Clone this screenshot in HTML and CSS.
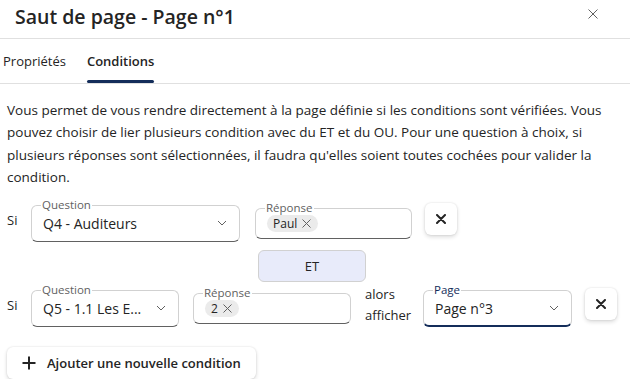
FILE: index.html
```html
<!DOCTYPE html>
<html lang="fr">
  <head>
    <meta charset="UTF-8" />
    <meta name="viewport" content="width=device-width, initial-scale=1.0" />
    <title>Saut de page</title>
    <link rel="stylesheet" href="styles.css">
  </head>
  <body>
    <div class="dialog">
      <header class="dialog-header">
        <h1>Saut de page - Page n°1</h1>
        <button class="close-button" aria-label="Fermer">
          <svg width="10" height="10" viewBox="0 0 10 10">
            <path d="M0.5 0.5 L9.5 9.5 M9.5 0.5 L0.5 9.5" stroke="#616161" stroke-width="1" fill="none" />
          </svg>
        </button>
      </header>

      <nav class="tabs">
        <button class="tab">Propriétés</button>
        <button class="tab tab-active">Conditions</button>
      </nav>

      <div class="content">
        <p class="description">
          Vous permet de vous rendre directement à la page définie si les conditions sont vérifiées. Vous
          pouvez choisir de lier plusieurs condition avec du ET et du OU. Pour une question à choix, si
          plusieurs réponses sont sélectionnées, il faudra qu'elles soient toutes cochées pour valider la
          condition.
        </p>

        <!-- condition 1 -->
        <div class="condition-row">
          <span class="row-label">Si</span>
          <fieldset class="field field-select question-1">
            <legend>Question</legend>
            <div class="field-value">
              <span class="value-text">Q4 - Auditeurs</span>
              <svg class="chevron" width="10" height="6" viewBox="0 0 10 6">
                <path d="M1 1 L5 5 L9 1" stroke="#616161" stroke-width="1" fill="none" />
              </svg>
            </div>
          </fieldset>
          <fieldset class="field field-tags answer-1">
            <legend>Réponse</legend>
            <div class="tag-list">
              <span class="tag">Paul
                <svg width="9" height="9" viewBox="0 0 9 9">
                  <path d="M0.5 0.5 L8.5 8.5 M8.5 0.5 L0.5 8.5" stroke="#616161" stroke-width="1" fill="none" />
                </svg>
              </span>
            </div>
          </fieldset>
          <button class="delete-button" aria-label="Supprimer">
            <svg width="10" height="10" viewBox="0 0 10 10">
              <path d="M1 1 L9 9 M9 1 L1 9" stroke="#242424" stroke-width="2" stroke-linecap="round" fill="none" />
            </svg>
          </button>
        </div>

        <div class="operator">
          <button class="operator-button">ET</button>
        </div>

        <!-- condition 2 -->
        <div class="condition-row">
          <span class="row-label">Si</span>
          <fieldset class="field field-select question-2">
            <legend>Question</legend>
            <div class="field-value">
              <span class="value-text">Q5 - 1.1 Les E...</span>
              <svg class="chevron" width="10" height="6" viewBox="0 0 10 6">
                <path d="M1 1 L5 5 L9 1" stroke="#616161" stroke-width="1" fill="none" />
              </svg>
            </div>
          </fieldset>
          <fieldset class="field field-tags answer-2">
            <legend>Réponse</legend>
            <div class="tag-list">
              <span class="tag">2
                <svg width="9" height="9" viewBox="0 0 9 9">
                  <path d="M0.5 0.5 L8.5 8.5 M8.5 0.5 L0.5 8.5" stroke="#616161" stroke-width="1" fill="none" />
                </svg>
              </span>
            </div>
          </fieldset>
          <span class="then-label">alors<br>afficher</span>
          <fieldset class="field field-select field-focused page-select">
            <legend>Page</legend>
            <div class="field-value">
              <span class="value-text">Page n°3</span>
              <svg class="chevron" width="10" height="6" viewBox="0 0 10 6">
                <path d="M1 1 L5 5 L9 1" stroke="#616161" stroke-width="1" fill="none" />
              </svg>
            </div>
          </fieldset>
          <button class="delete-button" aria-label="Supprimer">
            <svg width="10" height="10" viewBox="0 0 10 10">
              <path d="M1 1 L9 9 M9 1 L1 9" stroke="#242424" stroke-width="2" stroke-linecap="round" fill="none" />
            </svg>
          </button>
        </div>

        <button class="add-button">
          <svg width="14" height="14" viewBox="0 0 14 14">
            <path d="M7 0.5 V13.5 M0.5 7 H13.5" stroke="#242424" stroke-width="2" fill="none" />
          </svg>
          Ajouter une nouvelle condition
        </button>
      </div>
    </div>
  </body>
</html>
```

FILE: styles.css
```css
body {
  margin: 0;
  background-color: #ffffff;
  color: #242424;
  font-family: "Open Sans", "Noto Sans", sans-serif;
  font-size: 13px;
}
button {
  font-family: inherit;
  color: inherit;
  cursor: pointer;
}
.dialog {
  width: 630px;
}
.dialog-header {
  display: flex;
  align-items: center;
  justify-content: space-between;
  height: 38px;
  padding: 0 32px 0 15px;
  border-bottom: 1px solid #e0e0e0;
}
.dialog-header h1 {
  margin: 0;
  font-size: 19.5px;
  font-weight: 600;
  line-height: 26px;
  margin-top: -4px;
}
.close-button {
  display: flex;
  padding: 0;
  border: none;
  background: none;
  margin-top: -10px;
}
.tabs {
  display: flex;
  gap: 21px;
  height: 44px;
  padding-left: 3px;
  border-bottom: 1px solid #e0e0e0;
}
.tab {
  position: relative;
  padding: 0;
  border: none;
  background: none;
  font-size: 13px;
  line-height: 20px;
}
.tab-active {
  font-weight: 600;
}
.tab-active::after {
  content: "";
  position: absolute;
  left: 0;
  right: 0;
  bottom: 0;
  height: 3px;
  border-radius: 2px;
  background-color: #142d5a;
}
.content {
  padding: 0 7px;
}
.description {
  margin: 15px 0 9px;
  font-size: 13.5px;
  line-height: 22.3px;
}
.condition-row {
  display: flex;
  align-items: center;
}
.row-label {
  width: 24px;
}
.field {
  margin: 0;
  padding: 0 9px 8px;
  border: 1px solid #d1d1d1;
  border-bottom-color: #616161;
  border-radius: 6px;
  min-width: 0;
}
.field legend {
  padding: 0 1px;
  font-size: 11.5px;
  line-height: 16px;
  color: #616161;
}
.field-value {
  display: flex;
  align-items: center;
  justify-content: space-between;
  height: 20px;
  padding: 0 3px 0 2px;
  font-size: 14px;
}
.value-text {
  white-space: nowrap;
}
.field-tags {
  padding: 0 9px 4px;
}
.tag-list {
  display: flex;
  height: 18px;
  padding-left: 2px;
}
.tag {
  display: inline-flex;
  align-items: center;
  gap: 5px;
  height: 17px;
  margin-top: -1px;
  padding: 0 7px 0 6px;
  border-radius: 9px;
  background-color: #ebebeb;
  font-size: 12px;
}
.field-focused {
  border-bottom: 2px solid #142d5a;
  padding-bottom: 7px;
}
.field-focused legend {
  color: #142d5a;
}
.question-1 {
  width: 209px;
  box-sizing: border-box;
}
.answer-1 {
  width: 157px;
  box-sizing: border-box;
  margin-left: 15px;
}
.question-2 {
  width: 148px;
  box-sizing: border-box;
}
.answer-2 {
  width: 158px;
  box-sizing: border-box;
  margin-left: 14px;
}
.page-select {
  width: 149px;
  box-sizing: border-box;
}
.then-label {
  width: 58px;
  margin-left: 14px;
  line-height: 21px;
}
.delete-button {
  display: flex;
  align-items: center;
  justify-content: center;
  width: 32px;
  height: 32px;
  margin-left: 13px;
  padding: 0;
  border: none;
  border-radius: 6px;
  background-color: #ffffff;
  box-shadow: 0 0 2px rgba(0, 0, 0, 0.12), 0 2px 4px rgba(0, 0, 0, 0.14);
}
.condition-row .delete-button {
  margin-top: -1px;
}
.operator {
  display: flex;
  justify-content: center;
  padding-right: 6px;
  margin-top: 8px;
}
.operator-button {
  width: 108px;
  height: 32px;
  border: 1px solid #d1d1d1;
  border-radius: 6px;
  background-color: #e8ebfa;
  font-size: 13px;
}
.add-button {
  display: flex;
  align-items: center;
  gap: 11px;
  width: 249px;
  height: 32px;
  margin-top: 20px;
  padding: 0 0 0 15px;
  border: none;
  border-radius: 6px;
  background-color: #ffffff;
  box-shadow: 0 0 2px rgba(0, 0, 0, 0.12), 0 2px 4px rgba(0, 0, 0, 0.14);
  font-size: 13px;
  font-weight: 600;
}
```
